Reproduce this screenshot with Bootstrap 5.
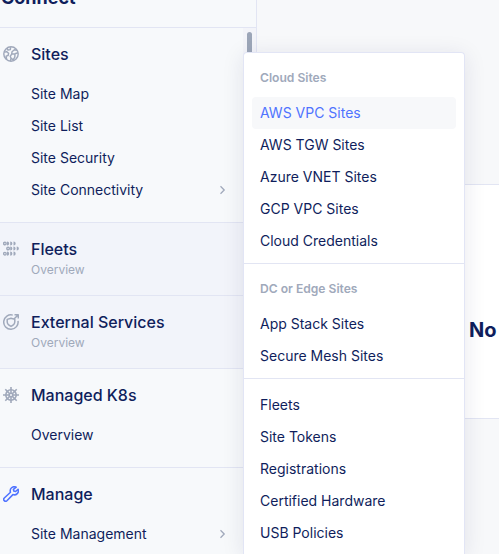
<!DOCTYPE html>
<html lang="en">
<head>
<meta charset="utf-8">
<meta name="viewport" content="width=device-width, initial-scale=1">
<title>Connect</title>
<link href="https://cdn.jsdelivr.net/npm/bootstrap@5.3.0/dist/css/bootstrap.min.css" rel="stylesheet">
<style>
:root { --ink: #0f1e5c; --line: #e2e5f3; --mute: #a0a9bb; }
body { font-family: Inter, "Liberation Sans", sans-serif; color: var(--ink); background: #f7f8fa; }
.side { width: 257px; border-right: 1px solid var(--line); background: #f7f9fb; }
.brand-head { height: 28px; border-bottom: 1px solid var(--line); }
.brand-head span { font-size: 18px; font-weight: 700; line-height: 24px; margin: -14px 0 0 1px; }
.menu { width: 243px; }
.track { width: 13px; background: #f3f4f9; padding: 4px 4px 0; }
.thumb { width: 5px; height: 150px; border-radius: 3px; background: #9ca6b8; }
.group { border-bottom: 1px solid var(--line); padding: 16px 0 16px 3px; }
.group.shaded { background: #f2f4fa; height: 73px; }
.group svg.glyph { width: 16px; height: 16px; color: var(--mute); margin-top: 2px; }
.group-title { font-size: 16px; font-weight: 500; line-height: 20px; }
.group-note { font-size: 12px; line-height: 16px; color: var(--mute); margin-top: 3px; }
.group-list { margin: 14px 0 0; padding-right: 16px; }
.entry { height: 32px; padding-bottom: 2px; color: var(--ink); font-size: 14px; text-decoration: none; white-space: nowrap; }
.chev { width: 10px; height: 10px; margin-top: 2px; color: var(--mute); }
.empty { margin-top: 184px; height: 235px; border: solid var(--line); border-width: 1px 0; padding-left: 212px; }
.empty span { font-size: 20px; font-weight: 700; line-height: 28px; margin-top: 56px; }
.flyout { left: 243px; top: 52px; bottom: 0; width: 222px; background: #fff; border: 1px solid #e2e5f5; border-bottom: 0; border-radius: 4px 4px 0 0; box-shadow: 0 3px 22px rgba(25, 25, 75, .10); }
.flyout-part { padding: 11px 8px 6px; border-bottom: 1px solid var(--line); }
.flyout-part:last-child { border: 0; padding: 10px 8px 0; }
.flyout-label { font-size: 12.1px; font-weight: 600; line-height: 16px; color: var(--mute); padding: 0 8px; margin: 6px 0 11px; }
.entry.chosen { color: #4f73ff; background: #f7f8fa; border-radius: 4px; }
</style>
</head>
<body class="vh-100 overflow-hidden position-relative">
<div class="d-flex vh-100">
  <nav class="side d-flex flex-column flex-shrink-0">
    <div class="brand-head d-flex flex-shrink-0 align-items-start"><span>Connect</span></div>
    <div class="d-flex flex-grow-1 overflow-hidden">
      <div class="menu flex-shrink-0">
        <section class="group d-flex">
          <svg class="glyph flex-shrink-0" viewBox="0 0 16 16" fill="none" stroke="currentColor" stroke-width="1.45" stroke-linejoin="round"><circle cx="8" cy="8" r="7.2"/><path d="M1.2 6.2l2.4-.6 2 1.7-.5 2.2-2 .6.5 3M4 2.2l1 1.9 2.3-.5.3-2.5M14 4.2l-2.6-.5L9 5.8l-.3 2.5-1.5 1.8.8 2.1-.6 2.9M9 7.9h3l-.2 3.3-1.6 2.7-2-1.6M12 7.7l3-1"/></svg>
          <div class="flex-grow-1 ms-2 ps-1"><div class="group-title">Sites</div>
            <div class="group-list d-flex flex-column">
              <a class="entry d-flex align-items-center">Site Map</a>
              <a class="entry d-flex align-items-center">Site List</a>
              <a class="entry d-flex align-items-center">Site Security</a>
              <a class="entry d-flex align-items-center justify-content-between">Site Connectivity<svg class="chev" viewBox="0 0 10 10" fill="none" stroke="currentColor" stroke-width="1.3"><path d="M3.5 1.3L7.2 5 3.5 8.7"/></svg></a>
            </div></div>
        </section>
        <section class="group shaded d-flex">
          <svg class="glyph flex-shrink-0" viewBox="0 0 16 16" fill="none" stroke="currentColor" stroke-width="1.4"><g id="convoy"><circle cx="1.9" cy="2.5" r="1.3"/><path d="M4 1.1q1.5 0 1.5 1.4T4 3.9M7.2 1.1q1.5 0 1.5 1.4T7.2 3.9M10.5 1.1q1.5 0 1.5 1.4t-1.5 1.4M4 2.5h1M7.2 2.5h1M10.5 2.5h1"/></g><use href="#convoy" x="3.2" y="5"/><use href="#convoy" y="10.2"/></svg>
          <div class="ms-2 ps-1"><div class="group-title">Fleets</div><div class="group-note">Overview</div></div>
        </section>
        <section class="group shaded d-flex">
          <svg class="glyph flex-shrink-0" viewBox="0 0 16 16" fill="none" stroke="currentColor" stroke-width="1.5" stroke-linejoin="round"><path d="M9.8 1.1A7.2 7.2 0 1 0 15 6.8M11 5l4-4M11.5.8h3.8v3.8M8 4.2l3.8 1.2v2.4c0 2.1-1.5 3.6-3.8 4.6-2.3-1-3.8-2.5-3.8-4.6V5.4z"/></svg>
          <div class="ms-2 ps-1"><div class="group-title">External Services</div><div class="group-note">Overview</div></div>
        </section>
        <section class="group d-flex">
          <svg class="glyph flex-shrink-0" viewBox="0 0 16 16" fill="none" stroke="currentColor" stroke-width="1.6"><circle cx="8" cy="8" r="5.2"/><circle cx="8" cy="8" r="1.8"/><path d="M8 0v6.2M8 9.8V16M0 8h6.2M9.8 8H16M2.3 2.3l4.4 4.4M9.3 9.3l4.4 4.4M13.7 2.3L9.3 6.7M6.7 9.3l-4.4 4.4"/></svg>
          <div class="flex-grow-1 ms-2 ps-1"><div class="group-title">Managed K8s</div>
            <div class="group-list"><a class="entry d-flex align-items-center">Overview</a></div></div>
        </section>
        <section class="group border-0 pb-0 d-flex">
          <svg class="glyph flex-shrink-0" viewBox="0 0 16 16" fill="none" stroke="#4f73ff" stroke-width="1.55" stroke-linejoin="round"><path d="M13.2 1.2A4.1 4.1 0 0 0 7.5 6.3L1.3 12a1.8 1.8 0 0 0 2.6 2.7l6-6.1a4.1 4.1 0 0 0 5.2-5.4l-2.5 2.3-1.8-.4-.4-1.8z"/></svg>
          <div class="flex-grow-1 ms-2 ps-1"><div class="group-title">Manage</div>
            <div class="group-list"><a class="entry d-flex align-items-center justify-content-between">Site Management<svg class="chev" viewBox="0 0 10 10" fill="none" stroke="currentColor" stroke-width="1.3"><path d="M3.5 1.3L7.2 5 3.5 8.7"/></svg></a></div></div>
        </section>
      </div>
      <div class="track flex-shrink-0"><div class="thumb"></div></div>
    </div>
  </nav>
  <main class="flex-grow-1 overflow-hidden"><div class="empty bg-white text-nowrap d-flex align-items-center"><span>No</span></div></main>
</div>
<div class="flyout position-absolute">
  <div class="flyout-part">
    <div class="flyout-label">Cloud Sites</div>
    <a class="entry chosen d-flex align-items-center px-2">AWS VPC Sites</a>
    <a class="entry d-flex align-items-center px-2">AWS TGW Sites</a>
    <a class="entry d-flex align-items-center px-2">Azure VNET Sites</a>
    <a class="entry d-flex align-items-center px-2">GCP VPC Sites</a>
    <a class="entry d-flex align-items-center px-2">Cloud Credentials</a>
  </div>
  <div class="flyout-part">
    <div class="flyout-label">DC or Edge Sites</div>
    <a class="entry d-flex align-items-center px-2">App Stack Sites</a>
    <a class="entry d-flex align-items-center px-2">Secure Mesh Sites</a>
  </div>
  <div class="flyout-part">
    <a class="entry d-flex align-items-center px-2">Fleets</a>
    <a class="entry d-flex align-items-center px-2">Site Tokens</a>
    <a class="entry d-flex align-items-center px-2">Registrations</a>
    <a class="entry d-flex align-items-center px-2">Certified Hardware</a>
    <a class="entry d-flex align-items-center px-2">USB Policies</a>
  </div>
</div>
<script src="https://cdn.jsdelivr.net/npm/bootstrap@5.3.0/dist/js/bootstrap.bundle.min.js"></script>
</body>
</html>
